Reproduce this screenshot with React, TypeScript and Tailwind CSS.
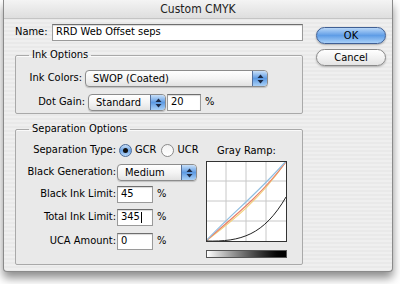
import type { ReactNode } from 'react';

const FONT = "font-['DejaVu_Sans',sans-serif] font-stretch-condensed";

function Arrows() {
  return (
    <svg width="7" height="10" viewBox="0 0 7 10" className="block">
      <path d="M3.5 0.5 L6.5 4 L0.5 4 Z" fill="#1c2a45" />
      <path d="M3.5 9.5 L6.5 6 L0.5 6 Z" fill="#1c2a45" />
    </svg>
  );
}

function Popup({ value, className }: { value: string; className: string }) {
  return (
    <div
      className={`flex h-[17px] items-stretch overflow-hidden rounded-[4px] border border-[#8c8c8c] bg-gradient-to-b from-white via-[#f4f4f4] to-[#e2e2e2] shadow-[0_1px_1px_rgba(0,0,0,0.18)] ${className}`}
    >
      <span className="flex-1 truncate pl-[7px] text-[11px] leading-[15px] text-black">{value}</span>
      <span className="flex w-[15px] items-center justify-center rounded-r-[3px] border-l border-[#54709c] bg-gradient-to-b from-[#c9e0f8] via-[#5d9ae2] to-[#a9d0f6]">
        <Arrows />
      </span>
    </div>
  );
}

function Field({ value, className, caret }: { value: string; className: string; caret?: boolean }) {
  return (
    <div
      className={`flex h-[17px] items-center border border-[#9a9a9a] border-t-[#6e6e6e] bg-white pl-[3px] text-[11px] text-black shadow-[inset_0_1px_1px_rgba(0,0,0,0.15)] ${className}`}
    >
      {value}
      {caret && <span className="ml-[1px] h-[11px] w-px bg-black" />}
    </div>
  );
}

function Group({ title, children, className }: { title: string; children: ReactNode; className: string }) {
  return (
    <fieldset className={`rounded-[2px] border border-[#a9a9a9] bg-[#e9e9e9] shadow-[inset_0_1px_0_#fafafa] ${className}`}>
      <legend className="ml-[13px] px-[3px] text-[11px] leading-[14px] text-black">{title}</legend>
      {children}
    </fieldset>
  );
}

function Radio({ checked, label }: { checked?: boolean; label: string }) {
  return (
    <div className="flex items-center gap-[3px]">
      <span
        className={`flex h-[13px] w-[13px] items-center justify-center rounded-full border ${
          checked
            ? 'border-[#4b6a98] bg-gradient-to-b from-[#c7def6] via-[#6ea4e6] to-[#b8d8f7]'
            : 'border-[#8a8a8a] bg-gradient-to-b from-[#f2f2f2] to-white'
        }`}
      >
        {checked && <span className="h-[5px] w-[5px] rounded-full bg-[#111]" />}
      </span>
      <span>{label}</span>
    </div>
  );
}

function Ramp() {
  return (
    <svg width="81" height="81" viewBox="0 0 81 81" className="block bg-white">
      {[20, 40, 60].map((p) => (
        <g key={p}>
          <line x1={p} y1="0" x2={p} y2="81" stroke="#c8c8c8" strokeWidth="1" />
          <line x1="0" y1={p} x2="81" y2={p} stroke="#c8c8c8" strokeWidth="1" />
        </g>
      ))}
      <path d="M0 80 C 22 63, 52 41, 79 2" fill="none" stroke="#f2d27a" strokeWidth="1.2" />
      <path d="M0 80 C 22 60, 52 38, 80 1" fill="none" stroke="#e9826a" strokeWidth="1.2" />
      <path d="M0 80 C 20 58, 50 34, 80 0" fill="none" stroke="#8fbde0" strokeWidth="1.2" />
      <path d="M0 80 C 35 81, 58 74, 80 36" fill="none" stroke="#222" strokeWidth="1" />
      <rect x="0.5" y="0.5" width="80" height="80" fill="none" stroke="#333" strokeWidth="1" />
    </svg>
  );
}

export default function App() {
  return (
    <div className={`h-[284px] w-[400px] overflow-hidden bg-white ${FONT}`}>
      <div className="ml-[3px] h-[272px] w-[390px] overflow-hidden rounded-b-[4px] border-x border-b border-[#8a8a8a] bg-[#ececec] bg-[repeating-linear-gradient(to_bottom,#efefef_0px,#efefef_2px,#e9e9e9_2px,#e9e9e9_4px)] shadow-[0_6px_10px_rgba(0,0,0,0.45)]">
        {/* Title bar */}
        <div className="flex h-[19px] items-center justify-center border-b border-[#c4c4c4] bg-gradient-to-b from-[#f4f4f4] to-[#dedede] text-[12px] text-[#222]">
          Custom CMYK
        </div>

        <div className="flex gap-[13px] pl-[11px] pt-[5px] text-[11px] text-black">
          {/* Left column */}
          <div className="flex w-[288px] flex-col">
            <div className="flex items-center gap-[2px]">
              <span className="w-[35px]">Name:</span>
              <Field value="RRD Web Offset seps" className="w-[251px]" />
            </div>

            <Group title="Ink Options" className="mt-[7px] w-[288px] pb-[2px]">
              <div className="mt-[8px] flex items-center gap-[3px]">
                <span className="w-[66px] text-right">Ink Colors:</span>
                <Popup value="SWOP (Coated)" className="w-[183px]" />
              </div>
              <div className="mt-[7px] flex items-center">
                <span className="w-[69px] text-right">Dot Gain:</span>
                <Popup value="Standard" className="ml-[3px] w-[78px]" />
                <Field value="20" className="ml-[1px] w-[34px]" />
                <span className="ml-[4px]">%</span>
              </div>
            </Group>

            <Group title="Separation Options" className="mt-[8px] w-[288px] pb-[6px]">
              <div className="flex">
                <div className="flex w-[190px] flex-col">
                  <div className="mt-[6px] flex h-[17px] items-center">
                    <span className="w-[100px] text-right">Separation Type:</span>
                    <div className="ml-[3px] flex items-center gap-[5px]">
                      <Radio checked label="GCR" />
                      <Radio label="UCR" />
                    </div>
                  </div>
                  <div className="mt-[5px] flex items-center">
                    <span className="w-[100px] text-right">Black Generation:</span>
                    <Popup value="Medium" className="ml-[1px] w-[80px]" />
                  </div>
                  <div className="mt-[5px] flex items-center">
                    <span className="w-[100px] text-right">Black Ink Limit:</span>
                    <Field value="45" className="ml-[1px] w-[36px]" />
                    <span className="ml-[4px]">%</span>
                  </div>
                  <div className="mt-[6px] flex items-center">
                    <span className="w-[100px] text-right">Total Ink Limit:</span>
                    <Field value="345" caret className="ml-[1px] w-[36px]" />
                    <span className="ml-[4px]">%</span>
                  </div>
                  <div className="mt-[7px] flex items-center">
                    <span className="w-[100px] text-right">UCA Amount:</span>
                    <Field value="0" className="ml-[1px] w-[36px]" />
                    <span className="ml-[4px]">%</span>
                  </div>
                </div>

                <div className="flex w-[81px] flex-col items-center">
                  <span className="mt-[6px] h-[17px] text-[11px] leading-[17px]">Gray Ramp:</span>
                  <div className="mt-[2px]">
                    <Ramp />
                  </div>
                  <div className="mt-[8px] h-[8px] w-[81px] border border-[#555] bg-gradient-to-r from-white to-black" />
                </div>
              </div>
            </Group>
          </div>

          {/* Buttons */}
          <div className="flex w-[70px] flex-col gap-[5px] pt-[3px]">
            <button
              type="button"
              className="h-[17px] rounded-full border border-[#3f5f94] bg-gradient-to-b from-[#b8d6f7] via-[#5f9de6] to-[#a8d0f8] text-[11px] leading-[15px] text-black shadow-[0_1px_2px_rgba(0,0,0,0.3)]"
            >
              OK
            </button>
            <button
              type="button"
              className="h-[17px] rounded-full border border-[#8a8a8a] bg-gradient-to-b from-white via-[#f2f2f2] to-[#e4e4e4] text-[11px] leading-[15px] text-black shadow-[0_1px_2px_rgba(0,0,0,0.25)]"
            >
              Cancel
            </button>
          </div>
        </div>
      </div>
    </div>
  );
}
